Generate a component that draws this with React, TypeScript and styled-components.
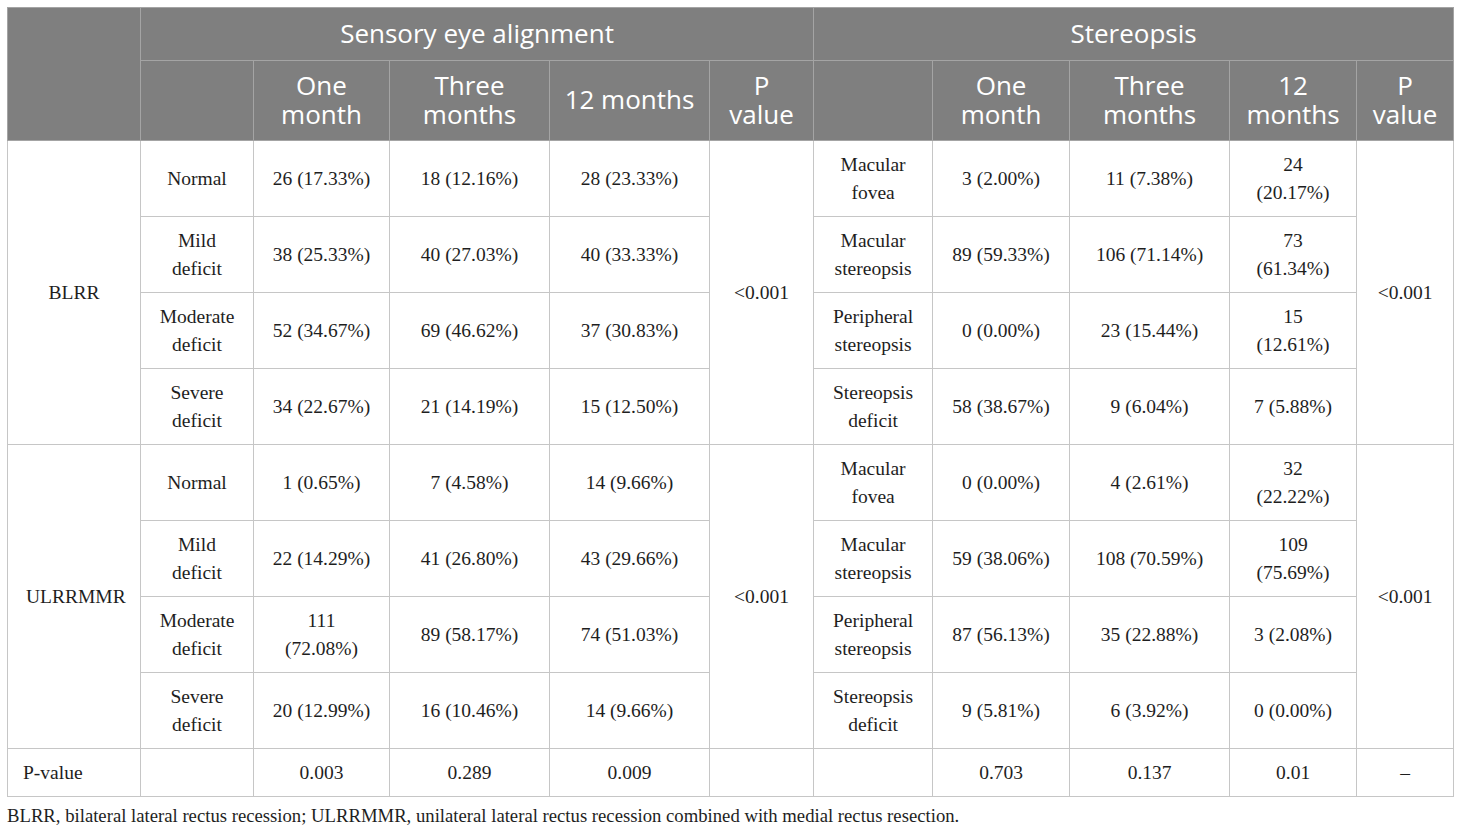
import { createGlobalStyle, styled } from 'styled-components'

const GlobalStyle = createGlobalStyle`
  body {
    margin: 0;
    background: #ffffff;
  }
`

const Page = styled.div`
  padding: 7px;
`

const Table = styled.table`
  width: 1446px;
  border-collapse: collapse;
  table-layout: fixed;
  border: 1px solid #c6c6c6;
`

const HeadRow = styled.tr<{ $height: number }>`
  height: ${({ $height }) => $height}px;
  background: #7f7f7f;
`

const HeadCell = styled.th`
  border: 1px solid #a4a4a4;
  color: #ffffff;
  font-family: 'Open Sans', 'Noto Sans', sans-serif;
  font-weight: 400;
  font-size: 26px;
  line-height: 29px;
  text-align: center;
  vertical-align: middle;
  padding: 0 10px 2px;
`

const BodyRow = styled.tr<{ $height: number }>`
  height: ${({ $height }) => $height}px;
`

const Cell = styled.td<{ $left?: boolean }>`
  border: 1px solid #c6c6c6;
  color: #1e1e1e;
  font-family: 'Liberation Serif', 'DejaVu Serif', serif;
  font-size: 19.5px;
  line-height: 28px;
  text-align: ${({ $left }) => ($left ? 'left' : 'center')};
  vertical-align: middle;
  padding: 0 ${({ $left }) => ($left ? '15px' : '18px')};
`

const Caption = styled.p`
  margin: 8px 0 0;
  color: #1e1e1e;
  font-family: 'Liberation Serif', 'DejaVu Serif', serif;
  font-size: 18.7px;
  line-height: 22px;
`

const widths = [133, 113, 136, 160, 160, 104, 119, 137, 160, 127, 97]

type Row = { sensory: [string, string, string, string]; stereo: [string, string, string, string] }

const groups: { name: string; p: string; pStereo: string; rows: Row[] }[] = [
  {
    name: 'BLRR',
    p: '<0.001',
    pStereo: '<0.001',
    rows: [
      { sensory: ['Normal', '26 (17.33%)', '18 (12.16%)', '28 (23.33%)'], stereo: ['Macular fovea', '3 (2.00%)', '11 (7.38%)', '24 (20.17%)'] },
      { sensory: ['Mild deficit', '38 (25.33%)', '40 (27.03%)', '40 (33.33%)'], stereo: ['Macular stereopsis', '89 (59.33%)', '106 (71.14%)', '73 (61.34%)'] },
      { sensory: ['Moderate deficit', '52 (34.67%)', '69 (46.62%)', '37 (30.83%)'], stereo: ['Peripheral stereopsis', '0 (0.00%)', '23 (15.44%)', '15 (12.61%)'] },
      { sensory: ['Severe deficit', '34 (22.67%)', '21 (14.19%)', '15 (12.50%)'], stereo: ['Stereopsis deficit', '58 (38.67%)', '9 (6.04%)', '7 (5.88%)'] },
    ],
  },
  {
    name: 'ULRRMMR',
    p: '<0.001',
    pStereo: '<0.001',
    rows: [
      { sensory: ['Normal', '1 (0.65%)', '7 (4.58%)', '14 (9.66%)'], stereo: ['Macular fovea', '0 (0.00%)', '4 (2.61%)', '32 (22.22%)'] },
      { sensory: ['Mild deficit', '22 (14.29%)', '41 (26.80%)', '43 (29.66%)'], stereo: ['Macular stereopsis', '59 (38.06%)', '108 (70.59%)', '109 (75.69%)'] },
      { sensory: ['Moderate deficit', '111 (72.08%)', '89 (58.17%)', '74 (51.03%)'], stereo: ['Peripheral stereopsis', '87 (56.13%)', '35 (22.88%)', '3 (2.08%)'] },
      { sensory: ['Severe deficit', '20 (12.99%)', '16 (10.46%)', '14 (9.66%)'], stereo: ['Stereopsis deficit', '9 (5.81%)', '6 (3.92%)', '0 (0.00%)'] },
    ],
  },
]

export default function App() {
  return (
    <Page>
      <GlobalStyle />
      <Table>
        <colgroup>
          {widths.map((w, i) => (
            <col key={i} style={{ width: w }} />
          ))}
        </colgroup>
        <thead>
          <HeadRow $height={53}>
            <HeadCell rowSpan={2} />
            <HeadCell colSpan={5}>Sensory eye alignment</HeadCell>
            <HeadCell colSpan={5}>Stereopsis</HeadCell>
          </HeadRow>
          <HeadRow $height={80}>
            <HeadCell />
            <HeadCell>One month</HeadCell>
            <HeadCell>Three months</HeadCell>
            <HeadCell>12 months</HeadCell>
            <HeadCell>P value</HeadCell>
            <HeadCell />
            <HeadCell>One month</HeadCell>
            <HeadCell>Three months</HeadCell>
            <HeadCell>12 months</HeadCell>
            <HeadCell>P value</HeadCell>
          </HeadRow>
        </thead>
        <tbody>
          {groups.map((g) =>
            g.rows.map((r, i) => (
              <BodyRow key={g.name + i} $height={76}>
                {i === 0 && <Cell rowSpan={4}>{g.name}</Cell>}
                {r.sensory.map((v, j) => (
                  <Cell key={'s' + j}>{v}</Cell>
                ))}
                {i === 0 && <Cell rowSpan={4}>{g.p}</Cell>}
                {r.stereo.map((v, j) => (
                  <Cell key={'t' + j}>{v}</Cell>
                ))}
                {i === 0 && <Cell rowSpan={4}>{g.pStereo}</Cell>}
              </BodyRow>
            ))
          )}
          <BodyRow $height={48}>
            <Cell $left>P-value</Cell>
            <Cell />
            <Cell>0.003</Cell>
            <Cell>0.289</Cell>
            <Cell>0.009</Cell>
            <Cell />
            <Cell />
            <Cell>0.703</Cell>
            <Cell>0.137</Cell>
            <Cell>0.01</Cell>
            <Cell>–</Cell>
          </BodyRow>
        </tbody>
      </Table>
      <Caption>
        BLRR, bilateral lateral rectus recession; ULRRMMR, unilateral lateral rectus recession combined with medial rectus resection.
      </Caption>
    </Page>
  )
}
